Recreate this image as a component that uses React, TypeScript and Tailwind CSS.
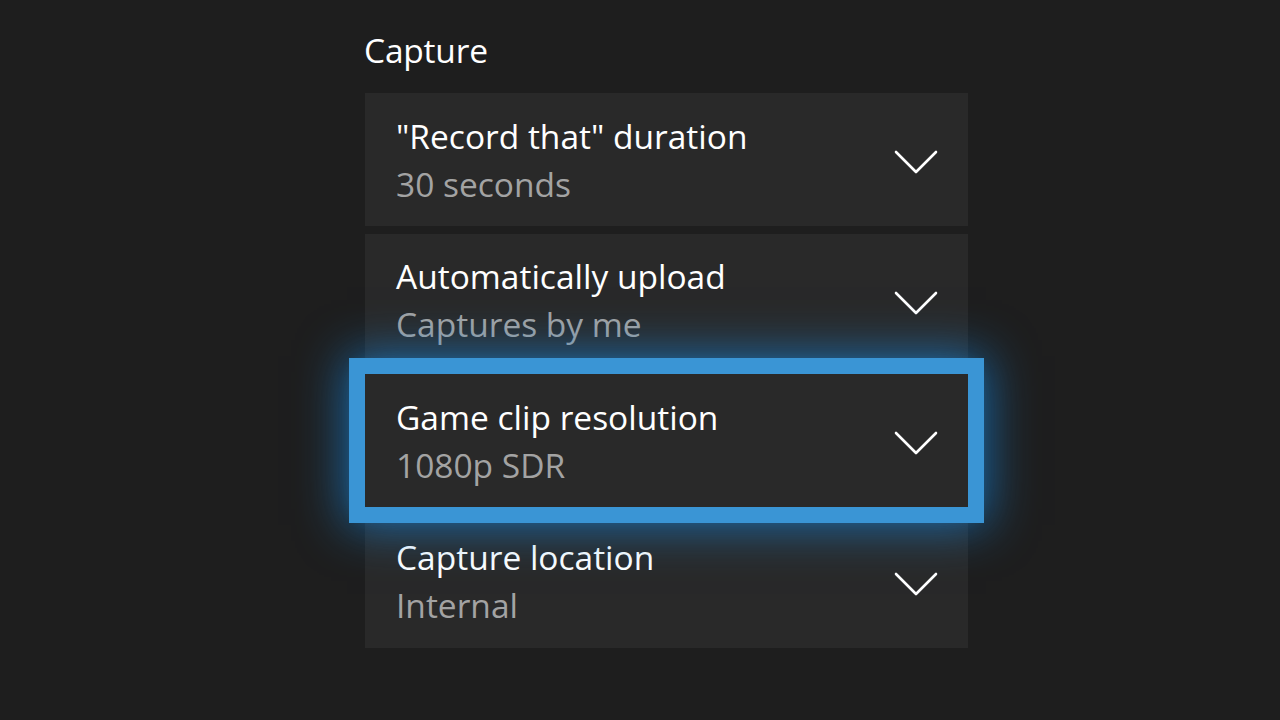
const SETTINGS = [
  { label: "\"Record that\" duration", value: "30 seconds", focused: false },
  { label: "Automatically upload", value: "Captures by me", focused: false },
  { label: "Game clip resolution", value: "1080p SDR", focused: true },
  { label: "Capture location", value: "Internal", focused: false },
];

function Chevron() {
  return (
    <svg width="44" height="26" viewBox="0 0 44 26" fill="none" className="shrink-0">
      <path
        d="M2 3 L22 23 L42 3"
        stroke="#ffffff"
        strokeWidth="2.6"
        strokeLinecap="round"
        strokeLinejoin="round"
      />
    </svg>
  );
}

export default function App() {
  return (
    <div
      className="h-[720px] w-[1280px] overflow-hidden bg-[#1e1e1e] pl-[365px] pt-[30px]"
      style={{ fontFamily: '"Open Sans", "Noto Sans", sans-serif' }}
    >
      <h1 className="-ml-[1px] h-[40px] text-[33.5px] leading-[40px] tracking-[-0.2px] text-white">
        Capture
      </h1>

      <div className="mt-[23px] flex w-[603px] flex-col gap-[7.5px]">
        {SETTINGS.map((s) => (
          <div
            key={s.label}
            className={`relative flex h-[133px] items-center justify-between bg-[#292929] pl-[31px] pr-[30px] ${
              s.focused
                ? "z-10 bg-[#2b2b2b] outline-[16px] outline-solid outline-[#3a95d5] shadow-[0_0_14px_6px_rgba(40,150,230,0.6),0_0_46px_18px_rgba(25,135,220,0.75)]"
                : ""
            }`}
          >
            <div className="flex flex-col">
              <span className="text-[33.5px] leading-[48px] text-white">{s.label}</span>
              <span className="text-[33.5px] leading-[48px] text-[#a3a3a3]">{s.value}</span>
            </div>
            <div className="mt-[5px]">
              <Chevron />
            </div>
          </div>
        ))}
      </div>
    </div>
  );
}
